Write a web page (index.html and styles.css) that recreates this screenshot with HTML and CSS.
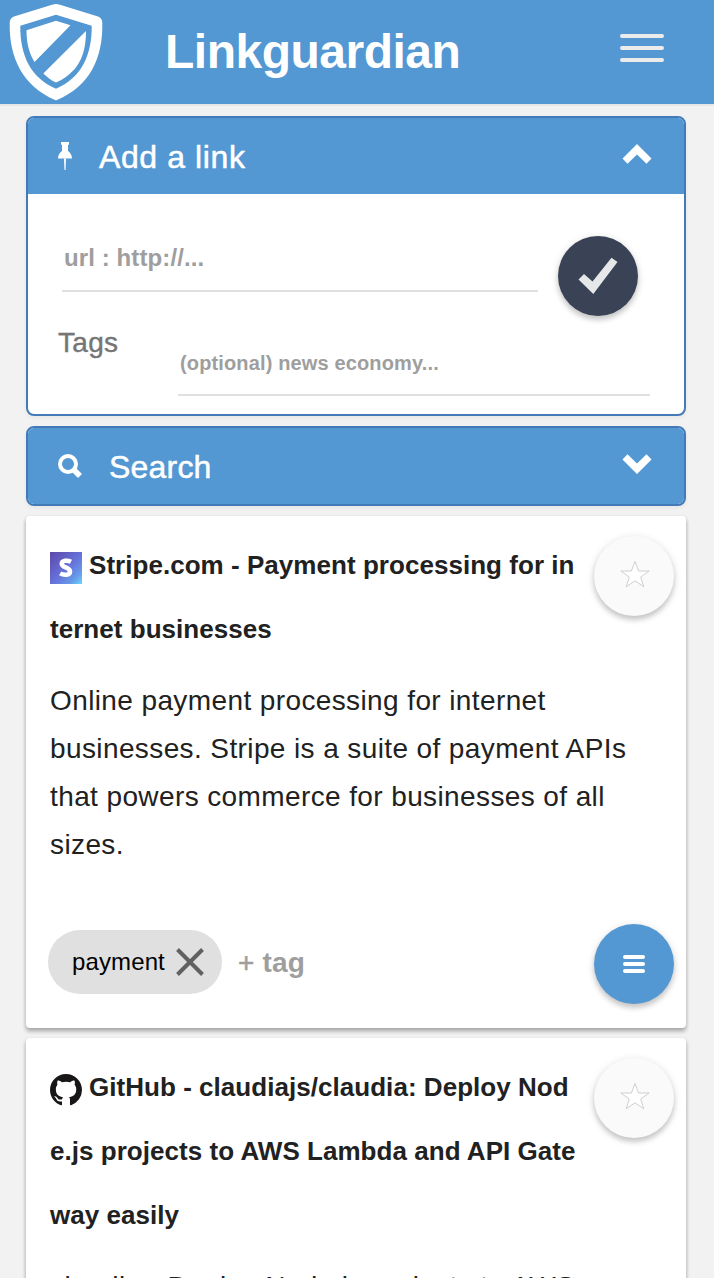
FILE: index.html
```html
<!DOCTYPE html>
<html lang="en">
<head>
<meta charset="utf-8">
<title>Linkguardian</title>
<link rel="stylesheet" href="styles.css">
</head>
<body>
<header class="topbar">
  <svg class="logo" viewBox="0 0 96 98">
    <path fill="#fff" fill-rule="evenodd" d="M44 1.700Q48 .3 52 1.700L90 13.500Q94.300 15 94.300 20C95 55 82 83 49 97Q48 97.400 47 97C15 83 1 55 1.700 20Q1.700 15 6 13.500ZM48 11.700L12.300 22.800C12 53 23 75 48 85.800C73 75 84 53 83.700 22.800Z"/>
    <path fill="#fff" d="M18.500 27.300L48 17.800L62.500 22.300L26.500 59C21 50 18.500 40 18.500 27.300ZM78 28C78 54 69 70 48 79.500C43 77.500 39 74 35.300 70.500Z"/>
  </svg>
  <h1 class="brand">Linkguardian</h1>
  <div class="menu"><span></span><span></span><span></span></div>
</header>
<main class="content">
  <section class="panel add">
    <div class="panel-head">
      <svg class="pin" viewBox="0 0 14 28">
        <defs><linearGradient id="needle" x2="0" y2="1"><stop offset="0" stop-color="#fff"/><stop offset="1" stop-color="#fff" stop-opacity=".55"/></linearGradient></defs>
        <path fill="#fff" d="M3 0H11V2.500L10 3V9C12.500 11 14 13 14 16.500H0C0 13 1.500 11 4 9V3L3 2.500Z"/><rect x="6" y="16.500" width="2" height="11.500" fill="url(#needle)"/>
      </svg>
      <h2 class="head-title">Add a link</h2>
      <svg class="chevron" viewBox="0 0 30 20"><path fill="#fff" d="M15 0L29.500 14.500L24.500 19.700L15 10.500L5.500 19.700L.5 14.500Z"/></svg>
    </div>
    <div class="form">
      <div class="url-row">
        <div class="field url">url : http://...</div>
        <div class="round submit"><svg width="40" height="38" viewBox="0 0 40 38"><path fill="#e6e7e9" d="M.5 22.500L6 17L14.500 24.500L33.500 .7L39.500 5L15.300 37Z"/></svg></div>
      </div>
      <div class="tags-row">
        <div class="tags-label">Tags</div>
        <div class="field tags">(optional) news economy...</div>
      </div>
    </div>
  </section>
  <section class="panel search">
    <div class="panel-head">
      <svg class="lens" viewBox="0 0 24 24"><circle cx="10" cy="10" r="8" fill="none" stroke="#fff" stroke-width="4"/><path d="M14.500 14.500L22 22" stroke="#fff" stroke-width="5.600"/></svg>
      <h2 class="head-title">Search</h2>
      <svg class="chevron" viewBox="0 0 30 20"><path fill="#fff" d="M15 20L29.500 5.500L24.500 .3L15 9.500L5.500 .3L.5 5.500Z"/></svg>
    </div>
  </section>
  <article class="card first">
    <div class="card-top">
      <h3 class="title"><svg class="favicon" viewBox="0 0 32 32">
        <defs><linearGradient id="violet" x2="1" y2="1"><stop offset="0" stop-color="#5d46a8"/><stop offset=".55" stop-color="#6675dc"/><stop offset=".8" stop-color="#679be9"/><stop offset="1" stop-color="#68d8fa"/></linearGradient></defs>
        <rect width="32" height="32" fill="url(#violet)"/><path fill="none" stroke="#fff" stroke-width="4.600" d="M21 9.800C17.500 8 11.800 8.300 11.800 11.800C11.800 16.200 20 14.600 20 19.500C20 23.600 13.500 23.400 10.200 21.400"/>
      </svg>Stripe.com - Payment processing for in<br>ternet businesses</h3>
      <div class="round star"><svg width="30" height="28" viewBox="0 0 30 28"><path fill="#fff" stroke="#cfcfcf" d="M15 1.500L18.600 11H29.200L20.700 17L23.800 26.800L15 20.800L6.200 26.800L9.300 17L.8 11H11.400Z"/></svg></div>
    </div>
    <p class="desc">Online payment processing for internet<br>businesses. Stripe is a suite of payment APIs<br>that powers commerce for businesses of all<br>sizes.</p>
    <div class="card-foot">
      <div class="chip">payment<svg width="28" height="28" viewBox="0 0 28 28"><path d="M1.500 1.500L26.500 26.500M26.500 1.500L1.500 26.500" stroke="#616161" stroke-width="4"/></svg></div>
      <div class="add-tag"><span class="plus">+</span> tag</div>
      <div class="round actions"><svg width="22" height="18" viewBox="0 0 22 18"><path d="M2 2H20M2 9H20M2 16H20" stroke="#fff" stroke-width="4" stroke-linecap="round"/></svg></div>
    </div>
  </article>
  <article class="card">
    <div class="card-top">
      <h3 class="title"><svg class="favicon" viewBox="0 0 16 16"><path fill="#181616" d="M8 0C3.580 0 0 3.580 0 8c0 3.540 2.290 6.530 5.470 7.590.4.070.55-.17.55-.38 0-.19-.01-.82-.01-1.490-2.010.37-2.530-.49-2.690-.94-.09-.23-.48-.94-.82-1.130-.28-.15-.68-.52-.01-.53.63-.01 1.080.58 1.230.82.72 1.210 1.870.87 2.330.66.07-.52.28-.87.51-1.070-1.780-.2-3.640-.89-3.640-3.950 0-.87.31-1.590.82-2.150-.08-.2-.36-1.020.08-2.120 0 0 .67-.21 2.200.82.64-.18 1.320-.27 2-.27s1.360.09 2 .27c1.530-1.040 2.200-.82 2.200-.82.44 1.100.16 1.920.08 2.120.51.56.82 1.270.82 2.150 0 3.070-1.870 3.750-3.650 3.950.29.25.54.73.54 1.480 0 1.070-.01 1.930-.01 2.200 0 .21.15.46.55.38A8.010 8.010 0 0 0 16 8c0-4.420-3.580-8-8-8z"/></svg>GitHub - claudiajs/claudia: Deploy Nod<br>e.js projects to AWS Lambda and API Gate<br>way easily</h3>
      <div class="round star"><svg width="30" height="28" viewBox="0 0 30 28"><path fill="#fff" stroke="#cfcfcf" d="M15 1.500L18.600 11H29.200L20.700 17L23.800 26.800L15 20.800L6.200 26.800L9.300 17L.8 11H11.400Z"/></svg></div>
    </div>
    <p class="desc">claudia - Deploy Node.js projects to AWS</p>
  </article>
</main>
</body>
</html>
```
FILE: styles.css
```css
* { box-sizing: border-box; }
html, body { height: 1278px; overflow: hidden; }
body {
  margin: 0;
  background: #f2f2f2;
  color: #212121;
  font-family: "Liberation Sans", Arial, sans-serif;
}
h1, h2, h3, p { margin: 0; }
svg { display: block; flex: none; }

.topbar {
  display: flex;
  height: 106px;
  background: #5397d3;
  border-bottom: 2px solid #e6e6e8;
}
.logo { width: 96px; height: 98px; margin: 3px 0 0 8px; }
.brand { margin: 25px 0 0 61px; font-size: 48px; line-height: 54px; letter-spacing: -.5px; color: #fff; }
.menu { display: flex; flex-direction: column; gap: 8px; margin: 34px 50px 0 auto; }
.menu span { width: 44px; height: 4px; border-radius: 2px; background: #ebebec; }

.content {
  display: flex;
  flex-direction: column;
  gap: 10px;
  padding: 10px 28px 0 26px;
}
.panel {
  flex: none;
  border: 2px solid #437ab7;
  border-radius: 8px;
  background: #fff;
  overflow: hidden;
  box-shadow: 0 2px 4px rgba(0, 0, 0, .05);
}
.add { height: 300px; }
.search { height: 80px; }
.panel-head {
  display: flex;
  align-items: flex-start;
  height: 76px;
  padding: 0 32px 0 30px;
  background: #5397d3;
  color: #fff;
}
.pin { width: 14px; height: 28px; margin-top: 24px; }
.head-title {
  margin: 21px 0 0 27px;
  font-size: 32px;
  line-height: 36px;
  font-weight: 400;
  letter-spacing: .6px;
  -webkit-text-stroke: .5px #fff;
}
.chevron { width: 30px; height: 20px; margin: 26px 0 0 auto; }
.lens { width: 24px; height: 24px; margin-top: 26px; }
.search .head-title { letter-spacing: .2px; }

.form { padding: 42px 34px 0 30px; }
.url-row { display: flex; justify-content: space-between; padding: 0 12px 0 4px; }
.field { color: #9e9e9e; font-weight: 700; border-bottom: 2px solid #e0e0e0; }
.url { width: 476px; height: 56px; padding: 8px 2px 0; font-size: 24px; line-height: 28px; letter-spacing: .1px; }
.round {
  display: flex;
  align-items: center;
  justify-content: center;
  flex: none;
  width: 80px;
  height: 80px;
  border-radius: 50%;
  box-shadow: 0 4px 5px rgba(0, 0, 0, .14), 0 2px 8px rgba(0, 0, 0, .14);
}
.submit { background: #394355; }
.tags-row { display: flex; justify-content: space-between; }
.tags-label { margin-top: 10px; font-size: 28px; line-height: 34px; letter-spacing: .3px; color: #757575; -webkit-text-stroke: .4px #757575; }
.tags { width: 472px; height: 80px; padding: 35px 2px 0; font-size: 20px; line-height: 24px; letter-spacing: .14px; }

.card {
  flex: none;
  padding: 17px 12px 0 24px;
  border-radius: 4px;
  background: #fff;
  box-shadow: 0 4px 4px rgba(0, 0, 0, .14), 0 2px 4px rgba(0, 0, 0, .24);
}
.first { height: 512px; }
.card-top { display: flex; justify-content: space-between; }
.title { font-size: 26px; line-height: 64px; letter-spacing: .04px; white-space: nowrap; }
.favicon { display: inline-block; width: 32px; height: 32px; margin-right: 7px; vertical-align: -10px; }
.star { margin-top: 3px; padding: 0 0 4px 1px; background: #fafafa; }
.desc { margin-top: 16px; font-size: 28px; line-height: 48px; letter-spacing: .39px; white-space: nowrap; }
.card-foot { display: flex; margin: 61px 0 0 -2px; }
.chip {
  display: flex;
  align-items: center;
  gap: 11px;
  width: 174px;
  height: 64px;
  padding-left: 24px;
  border-radius: 32px;
  background: #e0e0e0;
  color: #000;
  font-size: 24px;
  letter-spacing: .12px;
}
.add-tag { margin: 17px 0 0 16px; font-size: 28px; line-height: 32px; font-weight: 700; letter-spacing: .2px; color: #9e9e9e; }
.plus { font-weight: 400; -webkit-text-stroke: .5px #9e9e9e; }
.actions { margin: -6px 0 0 auto; background: #5397d3; }
```
